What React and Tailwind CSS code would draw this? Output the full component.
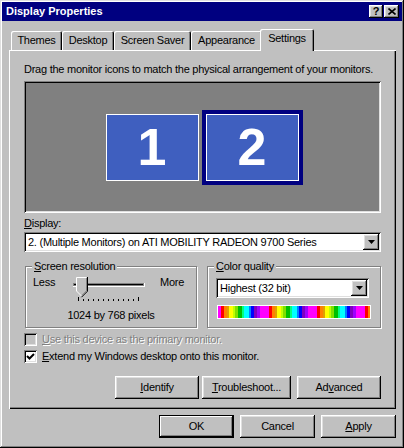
import React from 'react';

const raised =
  'shadow-[inset_-1px_-1px_#000,inset_1px_1px_#fff,inset_-2px_-2px_#808080,inset_2px_2px_#dfdfdf]';
const sunken =
  'shadow-[inset_1px_1px_#808080,inset_-1px_-1px_#fff,inset_2px_2px_#000,inset_-2px_-2px_#dfdfdf]';

const stripes = [
  ['#ff00ff', 3], ['#ff0000', 3], ['#ff8000', 3], ['#e0a000', 2], ['#ffff00', 4],
  ['#c0ff00', 2], ['#80e000', 3], ['#00c000', 4], ['#00ff80', 2], ['#00ffff', 5],
  ['#0080ff', 2], ['#0000ff', 3], ['#8000c0', 3], ['#a000ff', 3], ['#ff00ff', 6],
];

const ColorBar = () => {
  const rects = [];
  let x = 0;
  while (x < 152) {
    for (const [c, w] of stripes) {
      rects.push(<rect key={rects.length} x={x} y="0" width={w} height="12" fill={c} />);
      x += w;
    }
  }
  return (
    <div className="w-[154px] h-[14px] border border-white ml-[1px] overflow-hidden">
      <svg width="152" height="12" className="block">{rects}</svg>
    </div>
  );
};

const DropArrow = () => (
  <div className={`w-[16px] h-[16px] bg-[#c0c0c0] ${raised} flex items-center justify-center`}>
    <svg width="7" height="4" className="block">
      <polygon points="0,0 7,0 3.5,4" fill="#000" />
    </svg>
  </div>
);

const Combo = ({ text, className }) => (
  <div className={`bg-white ${sunken} p-[2px] flex items-center ${className}`}>
    <span className="flex-1 pl-[2px] whitespace-nowrap overflow-hidden">{text}</span>
    <DropArrow />
  </div>
);

const Button = ({ children, className = '', isDefault }) => (
  <div
    className={`h-[23px] bg-[#c0c0c0] flex items-center justify-center ${
      isDefault
        ? 'shadow-[inset_0_0_0_1px_#000,inset_-2px_-2px_#000,inset_2px_2px_#fff,inset_-3px_-3px_#808080]'
        : raised
    } ${className}`}
  >
    {children}
  </div>
);

const Tab = ({ label, w, selected }) => (
  <div
    className={`${w} flex items-start justify-center bg-[#c0c0c0] rounded-t-[2px] shadow-[inset_1px_1px_#fff,inset_-1px_0_#000,inset_-2px_0_#808080] ${
      selected ? 'h-[22px] -mb-[1px] -mx-[2px] relative z-10 pt-[3px]' : 'h-[19px] pt-[3px]'
    }`}
  >
    {label}
  </div>
);

const Group = ({ title, className, children }) => (
  <div
    className={`relative border border-[#808080] shadow-[inset_1px_1px_#fff,1px_1px_#fff] ${className}`}
  >
    <span className="absolute -top-[7px] left-[6px] px-[2px] bg-[#c0c0c0] leading-[13px]">{title}</span>
    {children}
  </div>
);

const Checkbox = ({ checked, disabled }) => (
  <div className={`w-[13px] h-[13px] ${sunken} ${disabled ? 'bg-[#c0c0c0]' : 'bg-white'} flex items-center justify-center`}>
    {checked && (
      <svg width="9" height="9" className="block">
        <path d="M1 4 L3.5 6.5 L8 2" stroke="#000" strokeWidth="2" fill="none" />
      </svg>
    )}
  </div>
);

const Slider = () => {
  const ticks = [];
  for (let i = 0; i < 13; i++) {
    const x = 7.5 + i * 5;
    const long = i === 0 || i === 12;
    ticks.push(<line key={i} x1={x} x2={x} y1={long ? 21 : 23} y2="25" stroke="#000" strokeWidth="1" />);
  }
  return (
    <svg width="80" height="26" className="block">
      <rect x="2" y="7" width="72" height="4" fill="#fff" />
      <rect x="2" y="7" width="71" height="3" fill="#808080" />
      <rect x="3" y="8" width="69" height="1" fill="#000" />
      <polygon points="5,1 16,1 16,15 10.5,20.5 5,15" fill="#c0c0c0" />
      <polyline points="5.5,15 5.5,1.5 15.5,1.5" stroke="#fff" fill="none" />
      <polyline points="16.5,1 16.5,15.2 10.5,21.2" stroke="#000" fill="none" />
      <polyline points="15.5,2 15.5,14.8 10.5,19.8" stroke="#808080" fill="none" />
      <line x1="5.5" y1="15" x2="10.5" y2="20" stroke="#fff" />
      {ticks}
    </svg>
  );
};

export default function App() {
  return (
    <div
      className={`w-[404px] h-[448px] bg-[#c0c0c0] text-black text-[11px] leading-[13px] tracking-[-0.25px] font-['Liberation_Sans',Arial,sans-serif] pt-[2px] px-[2px] shadow-[inset_-1px_-1px_#000,inset_1px_1px_#dfdfdf,inset_-2px_-2px_#808080,inset_2px_2px_#fff] select-none`}
    >
      {/* title bar */}
      <div className="h-[19px] bg-[#000080] flex items-center pl-[4px] pr-[3px]">
        <span className="flex-1 text-white font-bold tracking-normal">Display Properties</span>
        <div className="flex gap-[1px]">
          <div className={`w-[14px] h-[13px] bg-[#c0c0c0] ${raised} flex items-center justify-center font-bold text-[11px] leading-none tracking-normal`}>
            ?
          </div>
          <div className={`w-[15px] h-[13px] bg-[#c0c0c0] ${raised} flex items-center justify-center`}>
            <svg width="8" height="7" className="block">
              <path d="M0.5 0.5 L7.5 6.5 M7.5 0.5 L0.5 6.5" stroke="#000" strokeWidth="1.6" />
            </svg>
          </div>
        </div>
      </div>

      {/* tabs */}
      <div className="mt-[8px] h-[21px] flex items-end pl-[9px]">
        <Tab label="Themes" w="w-[51px]" />
        <Tab label="Desktop" w="w-[52px]" />
        <Tab label="Screen Saver" w="w-[77px]" />
        <Tab label="Appearance" w="w-[71px]" />
        <Tab label="Settings" w="w-[54px]" selected />
      </div>

      {/* page */}
      <div className="ml-[7px] w-[387px] h-[359px] px-[15px] pt-[13px] shadow-[inset_1px_1px_#fff,inset_-1px_-1px_#000,inset_-2px_-2px_#808080] flex flex-col">
        <div className="whitespace-nowrap">Drag the monitor icons to match the physical arrangement of your monitors.</div>

        <div className={`mt-[5px] h-[132px] bg-[#808080] ${sunken} flex items-center justify-center gap-[3px] pl-[3px]`}>
          <div className="w-[93px] h-[67px] bg-[#3f5fbf] border border-white flex items-center justify-center text-white font-bold text-[52px] tracking-normal">
            1
          </div>
          <div className="p-[4px] bg-[#000080]">
            <div className="w-[93px] h-[67px] bg-[#3f5fbf] border border-white flex items-center justify-center text-white font-bold text-[52px] tracking-normal">
              2
            </div>
          </div>
        </div>

        <div className="mt-[4px]">
          <u>D</u>isplay:
        </div>
        <Combo className="mt-[2px] h-[20px]" text="2. (Multiple Monitors) on ATI MOBILITY RADEON 9700 Series" />

        <div className="mt-[14px] flex gap-[10px]">
          <Group title={<><u>S</u>creen resolution</>} className="ml-[1px] w-[172px] h-[62px]">
            <div className="flex items-start pt-[9px] pl-[7px]">
              <span className="w-[38px]">Less</span>
              <Slider />
              <span className="ml-[9px]">More</span>
            </div>
            <div className="text-center pt-[7px]">1024 by 768 pixels</div>
          </Group>
          <Group title={<><u>C</u>olor quality</>} className="w-[174px] h-[62px]">
            <div className="pt-[11px] pl-[8px]">
              <Combo className="w-[153px] h-[20px]" text="Highest (32 bit)" />
              <div className="mt-[7px]">
                <ColorBar />
              </div>
            </div>
          </Group>
        </div>

        <div className="mt-[5px] flex items-center h-[13px]">
          <Checkbox disabled />
          <span className="ml-[5px] text-[#808080] [text-shadow:1px_1px_0_#fff]">
            <u>U</u>se this device as the primary monitor.
          </span>
        </div>
        <div className="mt-[4px] flex items-center h-[13px]">
          <Checkbox checked />
          <span className="ml-[5px]">
            <u>E</u>xtend my Windows desktop onto this monitor.
          </span>
        </div>

        <div className="mt-[13px] flex justify-end">
          <Button className="w-[84px]">
            <span><u>I</u>dentify</span>
          </Button>
          <Button className="w-[89px] ml-[3px]">
            <span><u>T</u>roubleshoot...</span>
          </Button>
          <Button className="w-[84px] ml-[6px]">
            <span>Ad<u>v</u>anced</span>
          </Button>
        </div>
      </div>

      {/* dialog buttons */}
      <div className="ml-[7px] w-[387px] mt-[6px] flex justify-end gap-[6px]">
        <Button className="w-[75px]" isDefault>OK</Button>
        <Button className="w-[75px]">Cancel</Button>
        <Button className="w-[75px]">
          <span><u>A</u>pply</span>
        </Button>
      </div>
    </div>
  );
}
